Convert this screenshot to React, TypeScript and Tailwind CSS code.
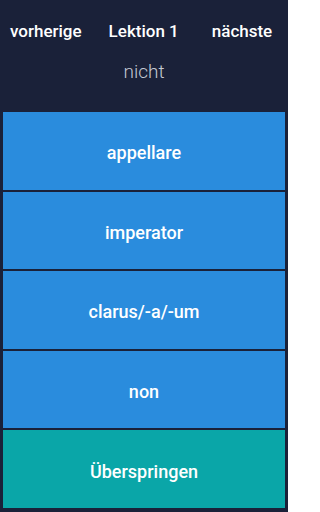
export default function App() {
  const items = ["appellare", "imperator", "clarus/-a/-um", "non"];
  return (
    <div
      className="w-[288px] h-[512px] bg-[#1a2139] flex flex-col"
      style={{ fontFamily: "Roboto, 'Liberation Sans', sans-serif" }}
    >
      <div className="h-[60px] flex items-center pl-[10px] pt-[4px] text-white text-[17px] font-medium">
        <span>vorherige</span>
        <span className="ml-[27px]">Lektion 1</span>
        <span className="ml-[33px]">nächste</span>
      </div>
      <div className="h-[52px] flex items-start justify-center text-[#c5c9d3] text-[19px] font-light leading-[24px]">
        nicht
      </div>
      <div className="flex-1 flex flex-col gap-[2px] px-[3px] pb-[4px]">
        {items.map((t) => (
          <div
            key={t}
            className="flex-1 bg-[#2a8cdd] flex items-center justify-center pt-[4px] text-white text-[18px] font-medium"
          >
            {t}
          </div>
        ))}
        <div className="flex-1 bg-[#0aa6a8] flex items-center justify-center pt-[4px] text-white text-[18px] font-medium">
          Überspringen
        </div>
      </div>
    </div>
  );
}
